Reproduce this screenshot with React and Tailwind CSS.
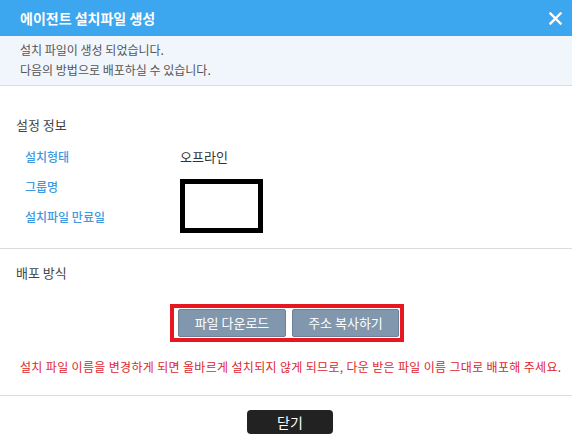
import React from "react"

const FONT = { fontFamily: '"Noto Sans CJK KR", "Noto Sans", sans-serif' }

function CloseIcon() {
  return (
    <svg width="13" height="13" viewBox="0 0 13 13">
      <path d="M1.5 1.5 L11.5 11.5 M11.5 1.5 L1.5 11.5" stroke="#fff" strokeWidth="2.4" strokeLinecap="square" />
    </svg>
  )
}

function InfoRow({ label, value }) {
  return (
    <div className="flex items-center h-[30px]">
      <div className="w-[155px] text-[12px] font-medium text-[#3d9ae2]">{label}</div>
      <div className="text-[13px] text-[#333]">{value}</div>
    </div>
  )
}

export default function App() {
  return (
    <div className="w-[572px] h-[445px] bg-white overflow-hidden" style={FONT}>

      <div className="h-[36px] bg-[#3ca6ef] flex items-center justify-between pl-5 pr-[10px]">
        <span className="text-white text-[14px] font-bold">에이전트 설치파일 생성</span>
        <CloseIcon />
      </div>

      <div className="h-[50px] bg-[#f1f6fd] border-b border-[#dcdcdc] pt-1 pl-5 text-[12px] leading-[20px] text-[#555]">
        <div>설치 파일이 생성 되었습니다.</div>
        <div>다음의 방법으로 배포하실 수 있습니다.</div>
      </div>

      <div className="pt-[29px] pl-4 text-[13px] leading-[20px] text-[#444]">설정 정보</div>

      <div className="relative mt-[7px] pl-[25px] pb-4">
        <InfoRow label="설치형태" value="오프라인" />
        <InfoRow label="그룹명" value="" />
        <InfoRow label="설치파일 만료일" value="" />
        <div className="absolute left-[180px] top-[37px] w-[83px] h-[54px] border-[5px] border-black bg-white" />
      </div>

      <div className="h-px bg-[#dcdcdc]" />

      <div className="pt-[14px] pl-4 text-[13px] leading-[20px] text-[#444]">배포 방식</div>

      <div className="flex justify-center mt-[21px] pl-[2px]">
        <div className="flex gap-[6px] border-4 border-[#e8161f] pl-1 pr-px py-px">
          <button className="w-[108px] h-[28px] bg-[#8097ad] border border-[#6a8196] rounded-[2px] text-white text-[13px]">파일 다운로드</button>
          <button className="w-[107px] h-[28px] bg-[#8097ad] border border-[#6a8196] rounded-[2px] text-white text-[13px]">주소 복사하기</button>
        </div>
      </div>

      <div className="mt-[15px] pl-5 text-[12px] leading-[20px] tracking-[0.33px] text-[#e0252b] whitespace-nowrap">
        설치 파일 이름을 변경하게 되면 올바르게 설치되지 않게 되므로, 다운 받은 파일 이름 그대로 배포해 주세요.
      </div>

      <div className="mt-[18px] h-px bg-[#dcdcdc]" />

      <div className="flex justify-center mt-[14px] pl-[8px]">
        <button className="w-[86px] h-[24px] bg-[#222] rounded text-white text-[14px] leading-[24px]">닫기</button>
      </div>

    </div>
  )
}
